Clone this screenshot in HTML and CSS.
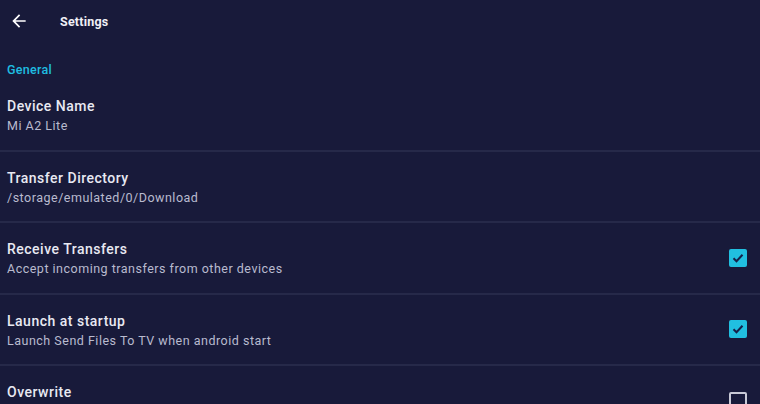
FILE: index.html
```html
<!DOCTYPE html>
<html>
<head>
<meta charset="utf-8">
<link rel="stylesheet" href="styles.css">
</head>
<body>
<div class="app">
  <header class="topbar">
    <svg class="back" viewBox="0 0 24 24" width="20" height="20"><path d="M20 11H7.83l5.59-5.59L12 4l-8 8 8 8 1.41-1.41L7.83 13H20v-2z" fill="#ffffff"/></svg>
    <span class="title">Settings</span>
  </header>
  <div class="section">General</div>
  <div class="row">
    <div class="text">
      <div class="name">Device Name</div>
      <div class="desc">Mi A2 Lite</div>
    </div>
  </div>
  <div class="row">
    <div class="text">
      <div class="name">Transfer Directory</div>
      <div class="desc">/storage/emulated/0/Download</div>
    </div>
  </div>
  <div class="row">
    <div class="text">
      <div class="name">Receive Transfers</div>
      <div class="desc">Accept incoming transfers from other devices</div>
    </div>
    <span class="check on"><svg viewBox="0 0 18 18" width="18" height="18"><path d="M4.5 9.2l3 3 6-6.4" fill="none" stroke="#16214a" stroke-width="2"/></svg></span>
  </div>
  <div class="row">
    <div class="text">
      <div class="name">Launch at startup</div>
      <div class="desc">Launch Send Files To TV when android start</div>
    </div>
    <span class="check on"><svg viewBox="0 0 18 18" width="18" height="18"><path d="M4.5 9.2l3 3 6-6.4" fill="none" stroke="#16214a" stroke-width="2"/></svg></span>
  </div>
  <div class="row">
    <div class="text">
      <div class="name">Overwrite</div>
      <div class="desc"></div>
    </div>
    <span class="check off"></span>
  </div>
</div>
</body>
</html>
```

FILE: styles.css
```css
html, body {
  margin: 0;
  padding: 0;
  background: #181a3a;
  overflow: hidden;
}
body {
  font-family: Roboto, "Liberation Sans", sans-serif;
  color: #e6e7f0;
}
.app {
  width: 760px;
  height: 404px;
  overflow: hidden;
}
.topbar {
  height: 42px;
  display: flex;
  align-items: center;
  padding-left: 9px;
}
.back {
  display: block;
}
.title {
  margin-left: 31px;
  font-size: 12.5px;
  font-weight: 700;
  letter-spacing: 0.2px;
  color: #f0f0f6;
}
.section {
  margin-top: 21px;
  padding-left: 7px;
  font-size: 12.5px;
  line-height: 14px;
  letter-spacing: 0.3px;
  color: #1fbde0;
  font-weight: 500;
  margin-bottom: 3px;
}
.row {
  display: flex;
  align-items: center;
  padding: 17px 13px 15.5px 7px;
  border-bottom: 2px solid #262949;
}
.text {
  flex: 1;
}
.name {
  font-size: 14px;
  line-height: 18px;
  font-weight: 500;
  letter-spacing: 0.5px;
  color: #e8e9f2;
}
.desc {
  margin-top: 3px;
  font-size: 12.5px;
  line-height: 16px;
  letter-spacing: 0.5px;
  color: #b9bbcf;
}
.desc:empty {
  height: 16px;
}
.check {
  width: 18px;
  height: 18px;
  border-radius: 2px;
  box-sizing: border-box;
  display: block;
  margin-top: -2px;
}
.check svg {
  display: block;
}
.check.on {
  background: #21bfe0;
}
.check.off {
  border: 2px solid #c8c9d6;
}
```
